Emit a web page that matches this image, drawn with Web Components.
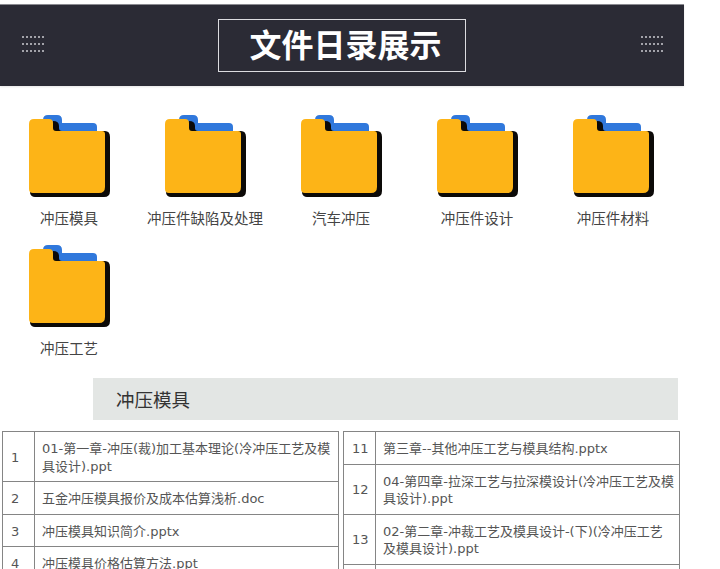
<!DOCTYPE html>
<html lang="zh">
<head>
<meta charset="utf-8">
<title>文件目录展示</title>
<style>
  html, body { margin: 0; height: 569px; overflow: hidden; background: #fff; }
  body { font-family: "DejaVu Sans", "Noto Sans CJK SC", sans-serif; }
  .folders {
    display: grid;
    grid-template-columns: repeat(5, 136px);
    grid-auto-rows: 130px;
    padding: 29px 0 3px 1px;
  }
  .tables {
    display: flex;
    gap: 4px;
    align-items: flex-start;
    margin: 11px 0 0 2px;
  }
</style>
</head>
<body>
  <page-banner>文件日录展示</page-banner>
  <div class="folders">
    <folder-item>冲压模具</folder-item>
    <folder-item>冲压件缺陷及处理</folder-item>
    <folder-item>汽车冲压</folder-item>
    <folder-item>冲压件设计</folder-item>
    <folder-item>冲压件材料</folder-item>
    <folder-item>冲压工艺</folder-item>
  </div>
  <section-title>冲压模具</section-title>
  <div class="tables">
    <file-table>
      <file-row num="1">01-第一章-冲压(裁)加工基本理论(冷冲压工艺及模具设计).ppt</file-row>
      <file-row num="2">五金冲压模具报价及成本估算浅析.doc</file-row>
      <file-row num="3">冲压模具知识简介.pptx</file-row>
      <file-row num="4">冲压模具价格估算方法.ppt</file-row>
    </file-table>
    <file-table>
      <file-row num="11">第三章--其他冲压工艺与模具结构.pptx</file-row>
      <file-row num="12">04-第四章-拉深工艺与拉深模设计(冷冲压工艺及模具设计).ppt</file-row>
      <file-row num="13">02-第二章-冲裁工艺及模具设计-(下)(冷冲压工艺及模具设计).ppt</file-row>
      <file-row></file-row>
    </file-table>
  </div>

<script>
class DotGrid extends HTMLElement {
  constructor(){
    super();
    this.attachShadow({ mode: 'open' });
    this.shadowRoot.innerHTML = `
      <style>
        :host{
          display: block;
          width: 24px;
          height: 21px;
          background-image: radial-gradient(circle at 2px 2px, #c4c4ca 0, #c4c4ca 0.6px, transparent 1.1px);
          background-size: 4px 7px;
        }
      </style>
    `;
  }
}

class PageBanner extends HTMLElement {
  constructor(){
    super();
    this.attachShadow({ mode: 'open' });
    this.shadowRoot.innerHTML = `
      <style>
        :host{
          display: flex;
          align-items: center;
          justify-content: space-between;
          box-sizing: border-box;
          width: 684px;
          height: 82px;
          margin-top: 4px;
          padding: 0 20px 0 21px;
          background: #2b2b35;
          border-top: 1px solid #8a8a90;
          box-shadow: 0 1px 2px #e6e6e6;
        }
        .title{
          box-sizing: border-box;
          width: 248px;
          height: 53px;
          margin-left: -2px;
          display: flex;
          align-items: center;
          justify-content: center;
          padding: 0 0 6px 8px;
          border: 1px solid #dcdce0;
          color: #fff;
          font: bold 32px/1 "Noto Sans CJK SC", sans-serif;
        }
      </style>
      <dot-grid></dot-grid>
      <div class="title"><slot></slot></div>
      <dot-grid></dot-grid>
    `;
  }
}

class FolderItem extends HTMLElement {
  constructor(){
    super();
    this.attachShadow({ mode: 'open' });
    this.shadowRoot.innerHTML = `
      <style>
        :host{
          display: flex;
          flex-direction: column;
          align-items: center;
          color: #444;
          font: 14.5px/20px "Noto Sans CJK SC", sans-serif;
        }
        svg{
          display: block;
          margin-bottom: 11px;
        }
      </style>
      <svg width="81" height="82" viewBox="0 0 81 82">
        <path fill="#3078dc" d="M14 5Q14 0 19 0H28Q33 0 33 5V8H64Q68 8 68 12V20H14Z"/>
        <path fill="#0c0a08" d="M24 6Q30 6 30 11V13Q30 16 33 16H76Q81 16 81 22V76Q81 82 75 82H6Q2 82 1 78Z"/>
        <path fill="#fdb417" d="M5 4H20Q24 4 24 8V13Q24 16 27 16H73Q76 16 76 19V72Q76 78 70 78H4Q0 78 0 74V9Q0 4 5 4Z"/>
      </svg>
      <div><slot></slot></div>
    `;
  }
}

class SectionTitle extends HTMLElement {
  constructor(){
    super();
    this.attachShadow({ mode: 'open' });
    this.shadowRoot.innerHTML = `
      <style>
        :host{
          display: flex;
          align-items: center;
          box-sizing: border-box;
          width: 585px;
          height: 42px;
          margin-left: 93px;
          padding-left: 23px;
          background: #e3e6e4;
          color: #333;
          font: 18.5px/1 "Noto Sans CJK SC", sans-serif;
        }
      </style>
      <slot></slot>
    `;
  }
}

class FileTable extends HTMLElement {
  constructor(){
    super();
    this.attachShadow({ mode: 'open' });
    this.shadowRoot.innerHTML = `
      <style>
        :host{
          display: block;
          box-sizing: border-box;
          width: 337px;
          border: 1px solid #858585;
          border-bottom: 0;
        }
      </style>
      <slot></slot>
    `;
  }
}

class FileRow extends HTMLElement {
  constructor(){
    super();
    this.attachShadow({ mode: 'open' });
    this.shadowRoot.innerHTML = `
      <style>
        :host{
          display: grid;
          grid-template-columns: 32px 1fr;
          border-bottom: 1px solid #858585;
          color: #555;
          font-size: 13px;
          line-height: 17.5px;
        }
        .num{
          display: flex;
          align-items: center;
          padding: 2px 0 0 8px;
          border-right: 1px solid #858585;
        }
        .name{
          padding: 8px 4px 6px 7px;
          min-height: 17.5px;
        }
      </style>
      <div class="num"></div>
      <div class="name"><slot></slot></div>
    `;
    this.shadowRoot.querySelector('.num').textContent = this.getAttribute('num') || '';
  }
}

customElements.define('dot-grid', DotGrid);
customElements.define('page-banner', PageBanner);
customElements.define('folder-item', FolderItem);
customElements.define('section-title', SectionTitle);
customElements.define('file-table', FileTable);
customElements.define('file-row', FileRow);
</script>
</body>
</html>
